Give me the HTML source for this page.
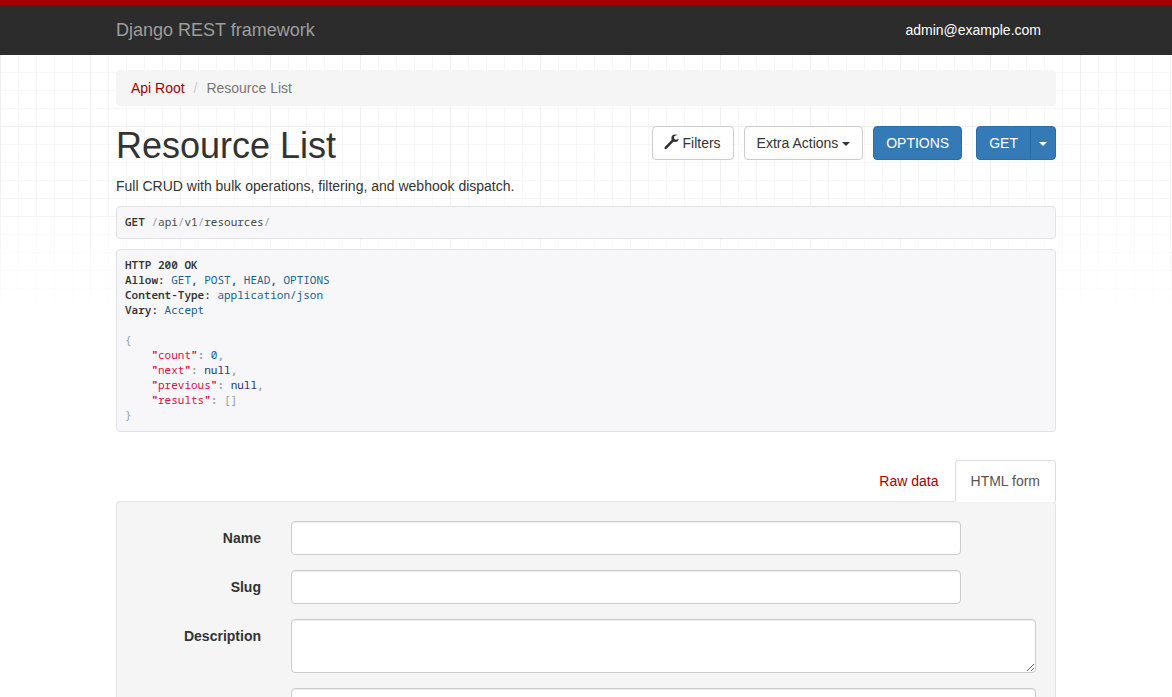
<!DOCTYPE html>
<html lang="en">
<head>
<meta charset="utf-8">
<title>Resource List – Django REST framework</title>
<style>
*, *:before, *:after { box-sizing: border-box; }
html { width: 100%; height: 100%; background: none; font-size: 10px; }
body {
  margin: 0; height: 100%;
  font-family: "Liberation Sans", "Helvetica Neue", Helvetica, Arial, sans-serif;
  font-size: 14px; line-height: 1.42857143; color: #333;
  background-color: #fff;
  background-image:
    linear-gradient(to bottom, rgba(255,255,255,0) 0, rgba(255,255,255,0) 185px, rgba(255,255,255,.9) 306px, #fff 306px),
    linear-gradient(to right, #f0f0f0 1px, transparent 1px),
    linear-gradient(to bottom, #f0f0f0 1px, transparent 1px),
    linear-gradient(to right, #f7f7f7 1px, transparent 1px),
    linear-gradient(to bottom, #f7f7f7 1px, transparent 1px);
  background-size: 100% 100%, 90px 90px, 90px 90px, 18px 18px, 18px 18px;
  background-position: 0 0, 0 0, 0 36px, 0 0, 0 0;
  background-repeat: no-repeat, repeat, repeat, repeat, repeat;
  overflow: hidden;
}
a { color: #A30000; text-decoration: none; }
.wrapper { position: relative; }
.navbar {
  position: fixed; left: 0; top: 0; width: 100%; z-index: 1030;
  background: #2C2C2C; color: #fff; border-top: 5px solid #A30000; height: 55px;
}
.container { width: 970px; margin: 0 auto; padding: 0 15px; }
.container:after, .clearfix:after { content: ""; display: table; clear: both; }
.navbar-brand { float: left; height: 50px; padding: 15px 15px; margin-left: -15px; font-size: 18px; line-height: 20px; color: #9d9d9d; }
.navbar-nav { float: right; margin: 0; padding: 0; list-style: none; }
.navbar-nav li { float: left; }
.navbar-nav li a { display: block; padding: 15px 15px; line-height: 20px; color: #fff; }
ul.breadcrumb { margin: 70px 0 0 0; padding: 8px 15px; list-style: none; background: #f5f5f5; border-radius: 4px; height: 36px; }
.breadcrumb li { display: inline-block; }
.breadcrumb li + li:before { content: "/\00a0"; padding: 0 5px; color: #ccc; }
.breadcrumb li.active a { color: #777; }
#content { margin: 0; padding-top: 20px; }
.btn {
  display: inline-block; padding: 6px 12px; margin: 0; font-size: 14px; font-weight: normal; line-height: 1.42857143;
  text-align: center; white-space: nowrap; vertical-align: middle; border: 1px solid transparent; border-radius: 4px;
  font-family: inherit; height: 34px;
}
.btn-default { color: #333; background: #fff; border-color: #ccc; }
.btn-primary { color: #fff; background: #337ab7; border-color: #2e6da4; }
.caret { display: inline-block; width: 0; height: 0; margin-left: 2px; vertical-align: middle; border-top: 4px dashed; border-top: 4px solid; border-right: 4px solid transparent; border-left: 4px solid transparent; }
.region > * { float: right; }
.btn .caret { margin-left: 0; }
.btn-filters { position: relative; }
.btn-filters .ico { display: inline-block; width: 13.4px; height: 1px; }
.btn-filters svg { position: absolute; left: 11px; top: 7.4px; overflow: visible; }
.btn-group { position: relative; display: inline-block; vertical-align: middle; }
.btn-group > .btn { float: left; position: relative; }
.btn-group > .btn:first-child { border-top-right-radius: 0; border-bottom-right-radius: 0; }
.btn-group > .dropdown-toggle { margin-left: -1px; border-top-left-radius: 0; border-bottom-left-radius: 0; padding-left: 8px; padding-right: 8px; }
.btn-group > .dropdown-toggle .caret { margin-left: 0; }
h1 { font-size: 36px; font-weight: 300; line-height: 1.1; margin: 0 0 10px; color: #333; font-family: inherit; }
p { margin: 0 0 10px; }
pre {
  display: block; margin: 0 0 10px; padding: 7px 8px 9px; font-family: "Noto Sans Mono", "DejaVu Sans Mono", "Liberation Mono", monospace;
  font-size: 11px; line-height: 15px; color: #333; background: #f7f7f9; border: 1px solid #e1e1e8; border-radius: 4px;
  overflow: hidden; white-space: pre; word-wrap: normal;
}
pre b { font-weight: 600; }
.lit { color: #195f91; }
.pun { color: #93a1a1; }
.q, .pb { font-weight: 700; }
.str { color: #D14; }
.kwd { color: #1e347b; }
.pln { color: #48484c; }
.response-info { margin-bottom: 28px; }
.nav-tabs { margin: 0; padding: 0; list-style: none; }
.nav-tabs:after { content: ""; display: table; clear: both; }
.nav-tabs > li { float: right; position: relative; display: block; margin-bottom: -1px; }
.nav-tabs > li > a { position: relative; display: block; padding: 10px 15px; line-height: 1.42857143; border: 1px solid transparent; border-radius: 4px 4px 0 0; }
.nav-tabs > li.active > a { color: #555; background: #fff; border: 1px solid #ddd; border-bottom-color: transparent; }
.well { min-height: 20px; padding: 19px; margin-bottom: 20px; background: #f5f5f5; border: 1px solid #e3e3e3; border-radius: 4px; }
.form-group { margin: 0 -15px 15px; }
.form-group:after { content: ""; display: table; clear: both; }
.control-label { float: left; width: 16.66666667%; padding: 7px 15px 0; margin: 0; text-align: right; font-weight: bold; }
.col-sm-10 { float: left; width: 83.33333333%; padding: 0 15px; }
.form-control {
  display: block; width: 90%; height: 34px; padding: 6px 12px; font-size: 14px; line-height: 1.42857143; color: #555;
  background: #fff; border: 1px solid #ccc; border-radius: 4px; box-shadow: inset 0 1px 1px rgba(0,0,0,.075);
  font-family: inherit; margin: 0; outline: none;
}
textarea.form-control { width: 100%; height: 54px; resize: vertical; overflow: auto; }
</style>
</head>
<body>
<div class="wrapper">
  <div class="navbar">
    <div class="container">
      <span><a class="navbar-brand" rel="nofollow" href="#">Django REST framework</a></span>
      <ul class="navbar-nav">
        <li><a href="#">admin@example.com</a></li>
      </ul>
    </div>
  </div>

  <div class="container">
    <ul class="breadcrumb">
      <li><a href="#">Api Root</a></li>
      <li class="active"><a href="#">Resource List</a></li>
    </ul>

    <div id="content">
      <div class="region clearfix" style="height:0">
        <div class="btn-group">
          <a class="btn btn-primary" href="#">GET</a>
          <button class="btn btn-primary dropdown-toggle"><span class="caret"></span></button>
        </div>
        <button class="btn btn-primary" style="margin-right:14px">OPTIONS</button>
        <button class="btn btn-default" style="margin-right:10px">Extra Actions <span class="caret"></span></button>
        <button class="btn btn-default btn-filters" style="margin-right:10px"><svg width="16" height="16" viewBox="0 0 16 16"><defs><mask id="wm"><rect x="-2" y="-2" width="20" height="20" fill="#fff"/><path d="M12.1 3.5 L16.9 2.4" stroke="#000" stroke-width="4.2" stroke-linecap="round" fill="none"/></mask></defs><path d="M1.7 13.8 L9 6.3" stroke="#333" stroke-width="2.6" stroke-linecap="round" fill="none"/><circle cx="11.1" cy="4.2" r="3.7" fill="#333" mask="url(#wm)"/></svg><span class="ico"></span> Filters</button>
      </div>

      <div class="content-main">
        <div class="page-header"><h1>Resource List</h1></div>
        <div><p>Full CRUD with bulk operations, filtering, and webhook dispatch.</p></div>

        <div class="request-info">
<pre class="prettyprint"><b>GET</b> <span class="pun">/</span><span class="pln">api</span><span class="pun">/</span><span class="pln">v1</span><span class="pun">/</span><span class="pln">resources</span><span class="pun">/</span></pre>
        </div>

        <div class="response-info">
<pre class="prettyprint"><span class="meta nocode"><b>HTTP 200 OK</b>
<b>Allow:</b> <span class="lit">GET<span class="pb">,</span> POST<span class="pb">,</span> HEAD<span class="pb">,</span> OPTIONS</span>
<b>Content-Type:</b> <span class="lit">application/json</span>
<b>Vary:</b> <span class="lit">Accept</span>

</span><span class="pun">{</span>
    <span class="str"><span class="q">"</span>count<span class="q">"</span></span><span class="pun pb">:</span> <span class="lit">0</span><span class="pun pb">,</span>
    <span class="str"><span class="q">"</span>next<span class="q">"</span></span><span class="pun pb">:</span> <span class="kwd">null</span><span class="pun pb">,</span>
    <span class="str"><span class="q">"</span>previous<span class="q">"</span></span><span class="pun pb">:</span> <span class="kwd">null</span><span class="pun pb">,</span>
    <span class="str"><span class="q">"</span>results<span class="q">"</span></span><span class="pun pb">:</span> <span class="pun">[]</span>
<span class="pun">}</span></pre>
        </div>
      </div>

      <div class="tabbable">
        <ul class="nav-tabs">
          <li class="active"><a href="#">HTML form</a></li>
          <li><a href="#">Raw data</a></li>
        </ul>
        <div class="well tab-content">
          <form>
            <div class="form-group">
              <label class="control-label">Name</label>
              <div class="col-sm-10"><input class="form-control" type="text" value=""></div>
            </div>
            <div class="form-group">
              <label class="control-label">Slug</label>
              <div class="col-sm-10"><input class="form-control" type="text" value=""></div>
            </div>
            <div class="form-group">
              <label class="control-label">Description</label>
              <div class="col-sm-10"><textarea class="form-control"></textarea></div>
            </div>
            <div class="form-group">
              <label class="control-label">Metadata</label>
              <div class="col-sm-10"><textarea class="form-control"></textarea></div>
            </div>
          </form>
        </div>
      </div>
    </div>
  </div>
</div>
</body>
</html>
